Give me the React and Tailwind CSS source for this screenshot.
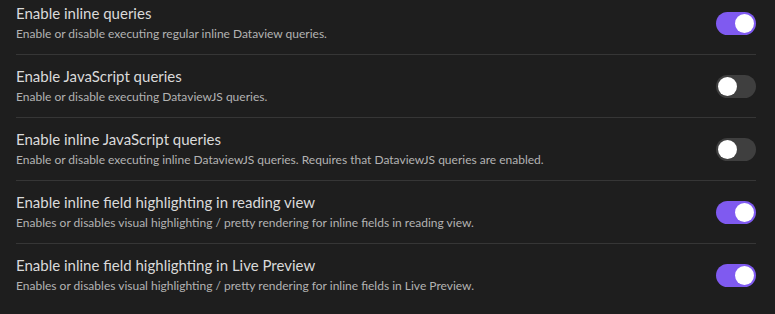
import React, { useState } from 'react';

const SETTINGS = [
    { name: 'Enable inline queries', desc: 'Enable or disable executing regular inline Dataview queries.', on: true },
    { name: 'Enable JavaScript queries', desc: 'Enable or disable executing DataviewJS queries.', on: false },
    { name: 'Enable inline JavaScript queries', desc: 'Enable or disable executing inline DataviewJS queries. Requires that DataviewJS queries are enabled.', on: false },
    { name: 'Enable inline field highlighting in reading view', desc: 'Enables or disables visual highlighting / pretty rendering for inline fields in reading view.', on: true },
    { name: 'Enable inline field highlighting in Live Preview', desc: 'Enables or disables visual highlighting / pretty rendering for inline fields in Live Preview.', on: true },
];

// Obsidian-style toggle switch
const Toggle = ({ on, onClick }) => (
    <button
        onClick={onClick}
        className={`relative shrink-0 w-[40px] h-[23px] rounded-full ${on ? 'bg-[#7f5af0]' : 'bg-[#3f3f3f]'}`}
    >
        <span
            className={`absolute top-[2px] w-[19px] h-[19px] rounded-full bg-white ${on ? 'left-[19px]' : 'left-[2px]'}`}
        />
    </button>
);

const App = () => {
    const [values, setValues] = useState(SETTINGS.map((s) => s.on));

    return (
        <div className="w-[775px] h-[314px] bg-[#1e1e1e] pl-4 pr-[19px] font-['Segoe_UI','Lato',sans-serif] overflow-hidden">
            {SETTINGS.map((s, i) => (
                <div
                    key={s.name}
                    className={`flex items-center justify-between gap-4 pb-[11px] ${i === 0 ? 'pt-[3px]' : 'pt-[11px] border-t border-[#363636]'}`}
                >
                    <div className="min-w-0">
                        <div className="text-[15px] leading-[20px] text-[#dadada]">{s.name}</div>
                        <div className="mt-[2px] text-[12px] leading-[18px] text-[#b3b3b3]">{s.desc}</div>
                    </div>
                    <Toggle
                        on={values[i]}
                        onClick={() => setValues((v) => v.map((x, j) => (j === i ? !x : x)))}
                    />
                </div>
            ))}
        </div>
    );
};

export default App;
